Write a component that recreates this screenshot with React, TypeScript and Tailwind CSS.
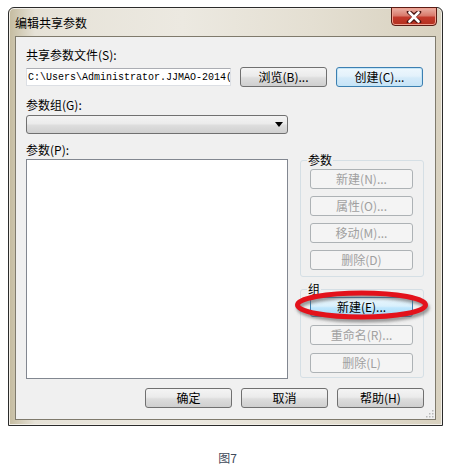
import React from 'react'

const UI_FONT = "font-['Noto_Sans_CJK_SC','Liberation_Sans',sans-serif]"

interface BtnProps {
  label: string
  kind?: 'normal' | 'focus' | 'hover' | 'disabled'
  className?: string
}

// Win7 style push button
function WinButton({ label, kind = 'normal', className = '' }: BtnProps) {
  const look = {
    normal:
      'border-[#707070] bg-[linear-gradient(#f4f4f4_0%,#ebebeb_45%,#dddddd_55%,#cfcfcf_100%)] text-black',
    focus:
      'border-[#3c7fb1] bg-[linear-gradient(#eef7fd_0%,#e3f1fb_45%,#d4eaf9_55%,#c6e3f7_100%)] text-black shadow-[inset_0_0_0_1px_#c4e5f6]',
    hover:
      'border-[#3c7fb1] bg-[linear-gradient(#eaf6fd_0%,#d9f0fc_45%,#bee6fd_55%,#a7d9f5_100%)] text-black',
    disabled: 'border-[#adb2b5] bg-[#f4f4f4] text-[#a0a0a0]',
  }[kind]
  return (
    <div
      className={`flex h-[20px] items-center justify-center rounded-[3px] border text-[12px] leading-none ${look} ${className}`}
    >
      {label}
    </div>
  )
}

function GroupBox({ title, children, className = '' }: { title: string; children: React.ReactNode; className?: string }) {
  return (
    <fieldset className={`rounded-[3px] border border-[#d5dfe5] px-[9px] ${className}`}>
      <legend className="-ml-[3px] h-[14px] px-[1px] text-[12px] leading-[14px]">{title}</legend>
      {children}
    </fieldset>
  )
}

export default function App() {
  return (
    <div className={`relative h-[470px] w-[455px] bg-white ${UI_FONT}`}>
      {/* window frame */}
      <div className="ml-[8px] pt-[7px]">
        <div className="w-[435px] rounded-t-[6px] border border-[#2b2b2b] bg-[linear-gradient(90deg,#c4bb9f_0%,#e6e2d7_6%,#ece9e1_40%,#e4dfd2_70%,#d8d1bf_100%)] px-[6px] pb-[5px] shadow-[inset_0_0_0_1px_#f2efe8]">
          {/* title bar */}
          <div className="flex h-[28px] items-start">
            <span className="mt-[8px] text-[12px] leading-[14px] text-black">编辑共享参数</span>
            <div className="ml-auto -mr-[1px] -mt-[1px] flex h-[19px] w-[46px] items-center justify-center rounded-b-[4px] border border-[#5a1c14] bg-[linear-gradient(#eab2a6_0%,#d97a6c_45%,#c2392b_55%,#b3301f_100%)] shadow-[inset_0_0_0_1px_#f0a090]">
              <svg width="16" height="12" viewBox="0 0 16 12">
                <path d="M3 1 L8 5 L13 1 M3 11 L8 7 L13 11 M8 5 L8 7" stroke="#4a1410" strokeWidth="4.5" strokeLinecap="round" fill="none" />
                <path d="M3.5 1.5 L12.5 10.5 M12.5 1.5 L3.5 10.5" stroke="#ffffff" strokeWidth="2.6" strokeLinecap="round" fill="none" />
              </svg>
            </div>
          </div>

          {/* client area */}
          <div className="relative flex h-[384px] w-[421px] flex-col border border-[#7f7a6c] bg-[#f0f0f0] pl-[10px] pr-[11px] text-[12px] text-black">
            <div className="mt-[10px] h-[16px] leading-[16px]">共享参数文件(S):</div>
            <div className="mt-[4px] flex h-[20px] items-center">
              <div className="flex h-[18px] w-[205px] items-center overflow-hidden whitespace-nowrap border border-[#dcdfe4] border-t-[#abadb3] bg-white pl-[1px] font-['Liberation_Mono',monospace] text-[10px] tracking-[0px]">
                C:\Users\Administrator.JJMAO-2014(
              </div>
              <WinButton label="浏览(B)..." className="ml-[9px] w-[87px]" />
              <WinButton label="创建(C)..." kind="focus" className="ml-[9px] w-[87px]" />
            </div>

            <div className="mt-[10px] h-[16px] leading-[16px]">参数组(G):</div>
            <div className="mt-[2px] flex h-[19px] w-[262px] items-center justify-end rounded-[3px] border border-[#707070] bg-[linear-gradient(#f3f3f3_0%,#ebebeb_45%,#dddddd_55%,#d0d0d0_100%)] pr-[4px]">
              <svg width="8" height="5" viewBox="0 0 8 5">
                <path d="M0 0 H8 L4 5 Z" fill="#000" />
              </svg>
            </div>

            <div className="mt-[8px] flex">
              <div className="flex flex-col">
                <div className="h-[16px] leading-[16px]">参数(P):</div>
                <div className="mt-[1px] h-[220px] w-[262px] border border-[#828790] bg-white" />
              </div>
              <div className="ml-[12px] mt-[11px] flex w-[124px] flex-col">
                <GroupBox title="参数" className="h-[124px]">
                  <div className="mt-[2px] flex flex-col gap-[7px]">
                    <WinButton label="新建(N)..." kind="disabled" className="w-[103px]" />
                    <WinButton label="属性(O)..." kind="disabled" className="w-[103px]" />
                    <WinButton label="移动(M)..." kind="disabled" className="w-[103px]" />
                    <WinButton label="删除(D)" kind="disabled" className="w-[103px]" />
                  </div>
                </GroupBox>
                <GroupBox title="组" className="mt-[5px] h-[96px]">
                  <div className="mt-[1px] flex flex-col gap-[8px]">
                    <WinButton label="新建(E)..." kind="hover" className="w-[103px]" />
                    <WinButton label="重命名(R)..." kind="disabled" className="w-[103px]" />
                    <WinButton label="删除(L)" kind="disabled" className="w-[103px]" />
                  </div>
                </GroupBox>
              </div>
            </div>

            <div className="mt-[9px] flex justify-end gap-[9px]">
              <WinButton label="确定" className="w-[87px]" />
              <WinButton label="取消" className="w-[87px]" />
              <WinButton label="帮助(H)" className="w-[87px]" />
            </div>

            {/* resize grip */}
            <svg className="absolute bottom-[1px] right-[1px]" width="10" height="10" viewBox="0 0 10 10">
              {[
                [8, 2], [8, 5], [5, 5], [8, 8], [5, 8], [2, 8],
              ].map(([x, y]) => (
                <rect key={`${x}-${y}`} x={x} y={y} width="1.5" height="1.5" fill="#b8b8b8" />
              ))}
            </svg>
          </div>
        </div>
      </div>

      {/* red annotation ellipse */}
      <svg className="absolute left-[288px] top-[284px]" width="150" height="44" viewBox="0 0 150 44">
        <defs>
          <filter id="blur" x="-10%" y="-30%" width="120%" height="160%">
            <feGaussianBlur stdDeviation="1.5" />
          </filter>
        </defs>
        <ellipse cx="75" cy="24" rx="64" ry="12" stroke="#5a5a5a" strokeOpacity="0.6" strokeWidth="5" fill="none" filter="url(#blur)" />
        <ellipse cx="73.5" cy="21" rx="64" ry="12" stroke="#e3121b" strokeWidth="5" fill="none" />
      </svg>

      <div className="mt-[25px] text-center text-[12px] leading-[14px] text-[#3f4a5a]">图7</div>
    </div>
  )
}
